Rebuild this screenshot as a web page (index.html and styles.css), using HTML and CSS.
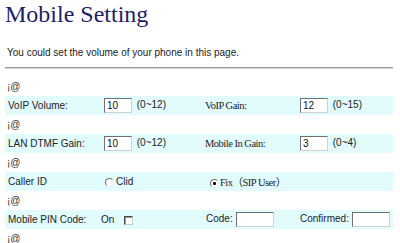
FILE: index.html
```html
<!DOCTYPE html>
<html lang="en">
<head>
<meta charset="utf-8">
<title>Mobile Setting</title>
<link rel="stylesheet" href="styles.css">
</head>
<body>
<div class="page">
  <h1 class="title">Mobile Setting</h1>
  <p class="intro">You could set the volume of your phone in this page.</p>
  <hr class="rule">
  <table class="form">
    <colgroup><col class="c1"><col class="c2"><col class="c3"><col class="c4"></colgroup>
    <tr class="sp"><td colspan="4">¡@</td></tr>
    <tr class="band">
      <td class="lbl">VoIP Volume:</td>
      <td><input class="fld w-num" type="text" value="10"> <span class="rng">(0~12)</span></td>
      <td class="lbl serif">VoIP Gain:</td>
      <td><input class="fld w-num first" type="text" value="12"> <span class="rng">(0~15)</span></td>
    </tr>
    <tr class="sp"><td colspan="4">¡@</td></tr>
    <tr class="band">
      <td class="lbl">LAN DTMF Gain:</td>
      <td><input class="fld w-num" type="text" value="10"> <span class="rng">(0~12)</span></td>
      <td class="lbl serif">Mobile In Gain:</td>
      <td><input class="fld w-num first" type="text" value="3"> <span class="rng">(0~4)</span></td>
    </tr>
    <tr class="sp"><td colspan="4">¡@</td></tr>
    <tr class="band">
      <td class="lbl">Caller ID</td>
      <td><input class="rad rad-a" type="radio" name="cid">Clid</td>
      <td class="serif" colspan="2"><input class="rad rad-b" type="radio" name="cid" checked>Fix（SIP User）</td>
    </tr>
    <tr class="sp"><td colspan="4">¡@</td></tr>
    <tr class="band">
      <td class="lbl">Mobile PIN Code:</td>
      <td>On <input class="chk" type="checkbox"></td>
      <td class="lbl">Code:<input class="fld w-code" type="text" value=""></td>
      <td>Confirmed:<input class="fld w-code" type="text" value=""></td>
    </tr>
    <tr class="sp"><td colspan="4">¡@</td></tr>
  </table>
</div>
</body>
</html>
```
FILE: styles.css
```css
html, body {
  margin: 0;
  background: #ffffff;
}
body {
  font-family: "Liberation Sans", Arial, sans-serif;
  color: #222222;
}
.page {
  padding: 0 7px 0 5px;
  width: 388px;
}
.title {
  margin: 0;
  font: normal 24px/28px "Liberation Serif", "Times New Roman", serif;
  color: #1e1e66;
}
.intro {
  margin: 19px 0 0 2px;
  font-size: 10px;
  line-height: 12px;
}
.rule {
  margin: 8px 0 0;
  height: 0;
  border: 0;
  border-top: 1px solid #9c9c9c;
  border-bottom: 1px solid #d4d4d4;
}
.form {
  margin-top: 8px;
  width: 388px;
  border-collapse: collapse;
  table-layout: fixed;
  font-size: 10px;
}
.c1 { width: 96px; }
.c2 { width: 102px; }
.c3 { width: 97px; }
.c4 { width: 93px; }
.form td {
  padding: 0;
  height: 19px;
  white-space: nowrap;
  vertical-align: middle;
}
.sp td {
  padding-left: 2px;
  color: #333333;
}
.band td {
  background: #e2fbfd;
}
.band td.lbl {
  padding-left: 3px;
}
.band td.serif {
  padding-left: 2px;
  font-family: "Liberation Serif", "Noto Sans CJK TC", serif;
  font-size: 10.5px;
  letter-spacing: -0.5px;
}
.fld {
  box-sizing: border-box;
  height: 15px;
  margin: 0 0 0 3px;
  padding: 0 0 0 2px;
  border: 1px solid;
  border-color: #707070 #d0d0d0 #d0d0d0 #707070;
  background: #ffffff;
  font: 10px "Liberation Sans", Arial, sans-serif;
  letter-spacing: 0;
  color: #111111;
  vertical-align: middle;
  outline: none;
}
.fld.first { margin-left: 0; }
.w-num { width: 28px; }
.w-code { width: 38px; }
.rng { letter-spacing: 0; margin-left: 2px; }
.rad {
  -webkit-appearance: none;
  appearance: none;
  box-sizing: border-box;
  width: 9px;
  height: 9px;
  margin: 0 2px 0 4px;
  border: 1px solid;
  border-color: #6e6e6e #e8e8e8 #e8e8e8 #6e6e6e;
  border-radius: 50%;
  background: #ffffff;
  vertical-align: middle;
}
.rad:checked {
  background: radial-gradient(circle, #111111 0 1.3px, #ffffff 1.8px);
}
.rad-b { margin-left: 5px; margin-right: 1px; }
.chk {
  -webkit-appearance: none;
  appearance: none;
  box-sizing: border-box;
  width: 9px;
  height: 9px;
  margin: 0 0 0 7px;
  border: 1px solid;
  border-color: #4a4a4a #cccccc #cccccc #4a4a4a;
  box-shadow: inset 1px 1px 0 #9a9a9a;
  background: #ffffff;
  vertical-align: middle;
}
```
